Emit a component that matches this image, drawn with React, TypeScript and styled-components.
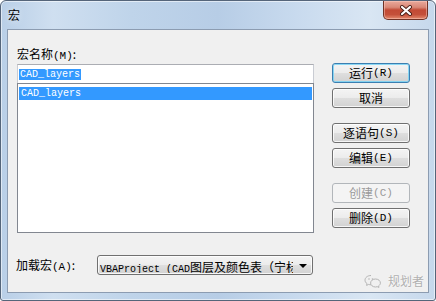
import React from "react";
import styled, { createGlobalStyle } from "styled-components";

const Global = createGlobalStyle`
  html, body { margin: 0; padding: 0; background: #ffffff; }
  #root { width: 436px; height: 301px; }
  * { box-sizing: border-box; }
`;

const CJK = `"Noto Sans CJK SC", "Noto Sans", sans-serif`;
const MONO = `"Liberation Mono", "DejaVu Sans Mono", monospace`;

const Window = styled.div`
  position: relative;
  width: 436px;
  height: 301px;
  border: 1px solid #55657a;
  border-radius: 6px 6px 3px 3px;
  background: linear-gradient(
    90deg,
    #b9cfe7 0%,
    #cfdff0 12%,
    #bfd4ea 30%,
    #b7cde6 50%,
    #c8daee 68%,
    #d9e6f3 85%,
    #c6d8ec 100%
  );
  box-shadow: inset 0 0 0 1px rgba(255, 255, 255, 0.55);
  display: flex;
  flex-direction: column;
  padding: 0 6px 7px 6px;
  overflow: hidden;
  font-family: ${CJK};
`;

const TitleBar = styled.div`
  height: 28px;
  display: flex;
  justify-content: space-between;
  align-items: flex-start;
`;

const Title = styled.div`
  padding: 7px 0 0 1px;
  font-size: 12px;
  line-height: 14px;
  color: #000;
  text-shadow: 0 0 6px rgba(255, 255, 255, 0.9);
`;

const CloseButton = styled.div`
  width: 45px;
  height: 19px;
  margin-right: 1px;
  border: 1px solid #6f3226;
  border-top: none;
  border-radius: 0 0 5px 5px;
  background: linear-gradient(
    180deg,
    #e9a99b 0%,
    #d98877 35%,
    #c24a35 50%,
    #c4503a 75%,
    #e48a6e 100%
  );
  box-shadow: inset 0 0 0 1px rgba(255, 210, 200, 0.45);
  display: flex;
  align-items: center;
  justify-content: center;
`;

const Client = styled.div`
  position: relative;
  flex: 1;
  border: 1px solid #8c9cb1;
  background: #f0f0f0;
  display: flex;
  flex-direction: column;
`;

const MainRow = styled.div`
  display: flex;
  padding: 17px 0 0 9px;
`;

const LeftCol = styled.div`
  width: 297px;
  display: flex;
  flex-direction: column;
`;

const Label = styled.div`
  font-size: 12px;
  line-height: 14px;
  height: 14px;
  color: #000;
  white-space: nowrap;
`;

const FieldLabel = styled(Label)`
  margin-bottom: 3px;
`;

const Hot = styled.span`
  font-family: ${MONO};
  font-size: 11px;
`;

const TextBox = styled.div`
  height: 20px;
  border: 1px solid #abadb3;
  border-left-color: #c9ccd3;
  border-right-color: #c9ccd3;
  background: #fff;
  display: flex;
  align-items: center;
  padding-left: 1px;
`;

const SelText = styled.span`
  font-family: ${MONO};
  font-size: 10px;
  line-height: 11px;
  height: 11px;
  padding: 0 1px;
  background: #3399ff;
  color: #fff;
`;

const ListBox = styled.div`
  height: 150px;
  margin-top: -1px;
  border: 1px solid #828790;
  background: #fff;
  padding: 3px 1px 0 1px;
`;

const ListItem = styled.div<{ $selected?: boolean }>`
  height: 13px;
  font-family: ${MONO};
  font-size: 10px;
  line-height: 13px;
  padding-left: 2px;
  background: ${(p) => (p.$selected ? "#3399ff" : "transparent")};
  color: ${(p) => (p.$selected ? "#fff" : "#000")};
`;

const RightCol = styled.div`
  margin: 16px 0 0 18px;
  width: 78px;
  display: flex;
  flex-direction: column;
`;

const Button = styled.button<{ $default?: boolean; $gap?: number }>`
  height: 20px;
  width: 78px;
  margin-top: ${(p) => p.$gap ?? 0}px;
  padding: 0;
  border: 1px solid ${(p) => (p.$default ? "#3c7fb1" : "#707070")};
  border-radius: 3px;
  background: linear-gradient(
    180deg,
    #f4f4f4 0%,
    #ececec 48%,
    #dedede 52%,
    #d2d2d2 100%
  );
  box-shadow: inset 0 0 0 1px
    ${(p) => (p.$default ? "rgba(120, 210, 245, 0.85)" : "rgba(255,255,255,0.8)")};
  font-family: ${CJK};
  font-size: 12px;
  line-height: 18px;
  color: #000;
  display: flex;
  align-items: center;
  justify-content: center;
  white-space: nowrap;

  &:disabled {
    border-color: #b2b6ba;
    background: #f4f4f4;
    box-shadow: none;
    color: #9a9a9a;
  }
`;

const BottomRow = styled.div`
  display: flex;
  align-items: center;
  margin-top: 22px;
  padding-left: 8px;
`;

const BottomLabel = styled(Label)`
  width: 81px;
`;

const Combo = styled.div`
  width: 216px;
  height: 20px;
  border: 1px solid #707070;
  border-radius: 3px;
  background: linear-gradient(
    180deg,
    #f4f4f4 0%,
    #ececec 48%,
    #dedede 52%,
    #d2d2d2 100%
  );
  box-shadow: inset 0 0 0 1px rgba(255, 255, 255, 0.8);
  display: flex;
  align-items: center;
  padding-left: 2px;
  overflow: hidden;
`;

const ComboText = styled.div`
  flex: 1;
  overflow: hidden;
  white-space: nowrap;
  line-height: 16px;
  height: 16px;
`;

const Mono = styled.span`
  font-family: ${MONO};
  font-size: 10px;
`;

const Han = styled.span`
  font-family: ${CJK};
  font-size: 12px;
`;

const Arrow = styled.div`
  width: 0;
  height: 0;
  margin: 1px 5px 0 6px;
  border-left: 4px solid transparent;
  border-right: 4px solid transparent;
  border-top: 4px solid #000;
`;

const Watermark = styled.div`
  position: absolute;
  right: 4px;
  bottom: 3px;
  display: flex;
  align-items: center;
  gap: 6px;
  font-family: ${CJK};
  font-size: 12px;
  color: #b0b0b0;
  text-shadow: 0 0 2px #fff;
`;

export default function App() {
  return (
    <>
      <Global />
      <Window>
        <TitleBar>
          <Title>宏</Title>
          <CloseButton>
            <svg width="14" height="11" viewBox="0 0 14 11">
              <path d="M3 2 L11 9 M11 2 L3 9" stroke="#4a2018" strokeWidth="4" strokeLinecap="round" />
              <path d="M3 2 L11 9 M11 2 L3 9" stroke="#ffffff" strokeWidth="2.2" strokeLinecap="round" />
            </svg>
          </CloseButton>
        </TitleBar>
        <Client>
          <MainRow>
            <LeftCol>
              <FieldLabel>
                宏名称<Hot>(M)</Hot>:
              </FieldLabel>
              <TextBox>
                <SelText>CAD_layers</SelText>
              </TextBox>
              <ListBox>
                <ListItem $selected>CAD_layers</ListItem>
              </ListBox>
            </LeftCol>
            <RightCol>
              <Button $default>
                运行<Hot>(R)</Hot>
              </Button>
              <Button $gap={5}>取消</Button>
              <Button $gap={15}>
                逐语句<Hot>(S)</Hot>
              </Button>
              <Button $gap={5}>
                编辑<Hot>(E)</Hot>
              </Button>
              <Button $gap={15} disabled>
                创建<Hot>(C)</Hot>
              </Button>
              <Button $gap={5}>
                删除<Hot>(D)</Hot>
              </Button>
            </RightCol>
          </MainRow>
          <BottomRow>
            <BottomLabel>
              加载宏<Hot>(A)</Hot>:
            </BottomLabel>
            <Combo>
              <ComboText>
                <Mono>VBAProject (CAD</Mono>
                <Han>图层及颜色表（宁标</Han>
              </ComboText>
              <Arrow />
            </Combo>
          </BottomRow>
          <Watermark>
            <svg width="18" height="14" viewBox="0 0 18 14">
              <path
                d="M7 1.5 C3.5 1.5 1 3.6 1 6.2 C1 7.6 1.8 8.8 3 9.6 L2.6 11.4 L4.6 10.4 C5.4 10.7 6.2 10.8 7 10.8"
                fill="none"
                stroke="#b4b4b4"
                strokeWidth="1"
              />
              <path
                d="M11.5 5 C8.7 5 6.6 6.8 6.6 9 C6.6 11.2 8.7 13 11.5 13 C12.1 13 12.7 12.9 13.2 12.7 L15 13.4 L14.6 11.9 C15.8 11.1 16.4 10.1 16.4 9 C16.4 6.8 14.3 5 11.5 5 Z"
                fill="none"
                stroke="#b4b4b4"
                strokeWidth="1"
              />
              <circle cx="5" cy="5" r="0.8" fill="#b4b4b4" />
              <circle cx="8.5" cy="5" r="0.8" fill="#b4b4b4" />
            </svg>
            规划者
          </Watermark>
        </Client>
      </Window>
    </>
  );
}
